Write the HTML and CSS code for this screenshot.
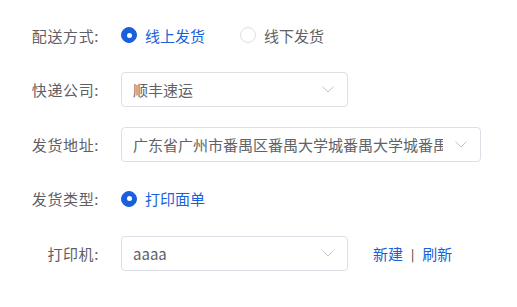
FILE: index.html
```html
<!DOCTYPE html>
<html lang="zh-CN">
<head>
<meta charset="utf-8">
<link rel="stylesheet" href="styles.css">
</head>
<body>
<form class="form">
  <div class="row">
    <label class="label">配送方式:</label>
    <div class="control radios">
      <span class="radio checked"><span class="dot"></span><span class="rtext">线上发货</span></span>
      <span class="radio"><span class="dot"></span><span class="rtext">线下发货</span></span>
    </div>
  </div>
  <div class="row">
    <label class="label">快递公司:</label>
    <div class="control">
      <div class="select short"><span class="value">顺丰速运</span><svg class="arrow" viewBox="0 0 12 7" width="12" height="7"><path d="M0.5 0.5 L6 6 L11.5 0.5" fill="none" stroke="#c0c4cc" stroke-width="1"/></svg></div>
    </div>
  </div>
  <div class="row">
    <label class="label">发货地址:</label>
    <div class="control">
      <div class="select long"><span class="value">广东省广州市番禺区番禺大学城番禺大学城番禺大学城</span><svg class="arrow" viewBox="0 0 12 7" width="12" height="7"><path d="M0.5 0.5 L6 6 L11.5 0.5" fill="none" stroke="#c0c4cc" stroke-width="1"/></svg></div>
    </div>
  </div>
  <div class="row">
    <label class="label">发货类型:</label>
    <div class="control radios">
      <span class="radio checked"><span class="dot"></span><span class="rtext">打印面单</span></span>
    </div>
  </div>
  <div class="row">
    <label class="label">打印机:</label>
    <div class="control">
      <div class="select short"><span class="value">aaaa</span><svg class="arrow" viewBox="0 0 12 7" width="12" height="7"><path d="M0.5 0.5 L6 6 L11.5 0.5" fill="none" stroke="#c0c4cc" stroke-width="1"/></svg></div>
      <div class="links"><a class="link">新建</a><span class="sep">|</span><a class="link">刷新</a></div>
    </div>
  </div>
</form>
</body>
</html>
```
FILE: styles.css
```css
html, body {
  margin: 0;
  padding: 0;
  background: #ffffff;
}
body {
  font-family: "Noto Sans CJK SC", "Noto Sans", sans-serif;
  font-size: 15px;
  color: #606266;
}
.form {
  display: flex;
  flex-direction: column;
  gap: 19.5px;
  padding-top: 17.5px;
}
.row {
  display: flex;
  align-items: center;
  height: 35px;
}
.label {
  width: 99px;
  text-align: right;
  flex: none;
  margin-right: 22px;
  color: #5f6066;
  letter-spacing: 0.6px;
}
.control {
  display: flex;
  align-items: center;
}
.radio {
  display: inline-flex;
  align-items: center;
  margin-right: 35px;
  color: #606266;
}
.radio .dot {
  width: 14px;
  height: 14px;
  border: 1px solid #dcdfe6;
  border-radius: 50%;
  box-sizing: content-box;
  margin-right: 8px;
  background: #fff;
  position: relative;
}
.radio.checked .dot {
  background: #1a5fdc;
  border-color: #1a5fdc;
}
.radio.checked .dot::after {
  content: "";
  position: absolute;
  left: 50%;
  top: 50%;
  width: 5px;
  height: 5px;
  margin: -2.5px 0 0 -2.5px;
  border-radius: 50%;
  background: #fff;
}
.radio.checked .rtext {
  color: #1a5fdc;
}
.select {
  display: flex;
  align-items: center;
  box-sizing: border-box;
  height: 35px;
  border: 1px solid #dcdfe6;
  border-radius: 4px;
  padding: 0 13px 0 11px;
  background: #fff;
}
.select.short { width: 227px; }
.select.long { width: 360px; }
.select .value {
  flex: 1;
  overflow: hidden;
  white-space: nowrap;
  color: #606266;
}
.select .arrow {
  flex: none;
  margin-left: 12px;
}
.links {
  display: flex;
  align-items: center;
  margin-left: 25px;
}
.link {
  color: #1a5fdc;
  cursor: pointer;
}
.sep {
  color: #222;
  font-size: 12px;
  margin: 0 8px;
}
```
